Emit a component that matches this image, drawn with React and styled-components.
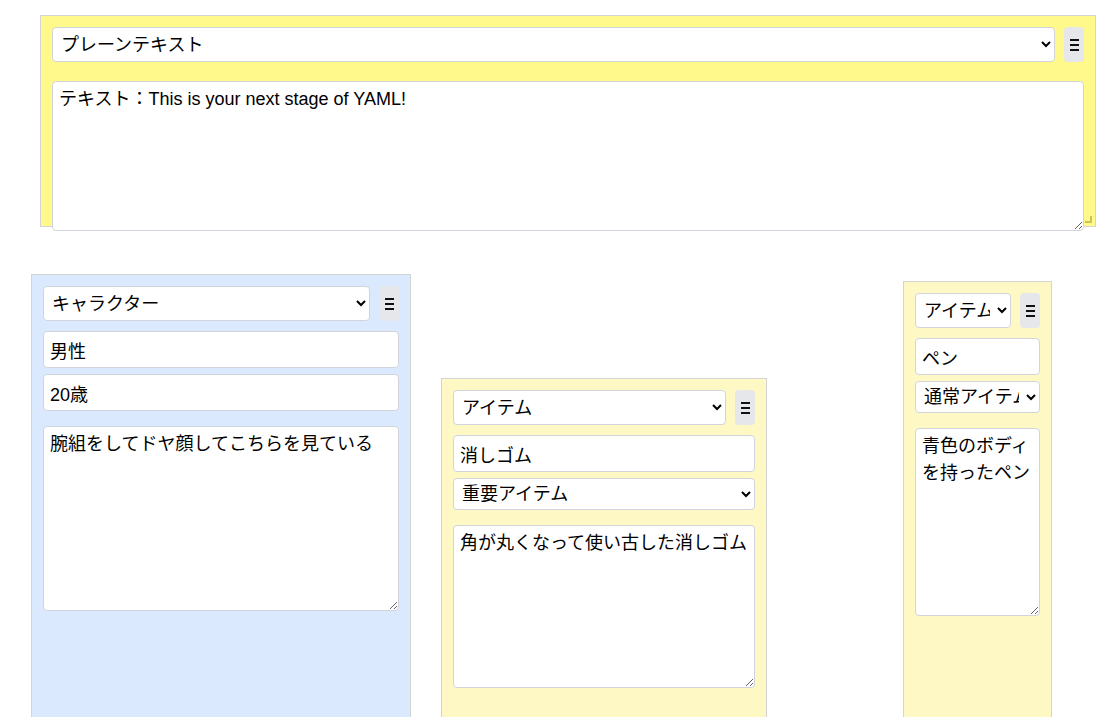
import styled, { createGlobalStyle } from "styled-components";

const GlobalStyle = createGlobalStyle`
    html, body {
        margin: 0;
        padding: 0;
        background: #fff;
        overflow: hidden;
    }
    body {
        font-family: "Liberation Sans", "Noto Sans CJK JP", sans-serif;
        color: #000;
    }
`;

const Board = styled.div`
    position: relative;
    width: 100%;
    height: 100vh;
    overflow: hidden;
`;

const colors = {
    plain: "#fff98b",
    character: "#dbe9fe",
    item: "#fef8c5",
};

const Card = styled.div`
    position: absolute;
    display: flex;
    flex-direction: column;
    align-items: stretch;
    box-sizing: border-box;
    padding: 11px;
    border: 1px solid #d4d4d4;
    background: ${({ $kind }) => colors[$kind]};
`;

const ResizeMark = styled.span`
    position: absolute;
    right: 3px;
    bottom: 3px;
    width: 5px;
    height: 5px;
    border-right: 2px solid #cfc25a;
    border-bottom: 2px solid #cfc25a;
`;

const Header = styled.div`
    display: flex;
    align-items: stretch;
    gap: 9px;
    margin-bottom: 10px;
`;

const fieldBase = `
    box-sizing: border-box;
    margin: 0;
    border: 1px solid #d1d5db;
    border-radius: 4px;
    background: #fff;
    color: #000;
    font-family: "Liberation Sans", "Noto Sans CJK JP", sans-serif;
    font-size: 18px;
    outline: none;
`;

const TypeSelect = styled.select`
    ${fieldBase}
    flex: 1;
    min-width: 0;
    height: 35px;
    padding: 0 4px;
`;

const MenuButton = styled.button`
    flex: none;
    display: flex;
    align-items: center;
    justify-content: center;
    width: 20px;
    height: 35px;
    padding: 0;
    border: none;
    border-radius: 4px;
    background: #e5e7eb;
    color: #111;
    cursor: pointer;
`;

const Fields = styled.div`
    display: flex;
    flex-direction: column;
    gap: 6px;
    margin-bottom: 6px;
`;

const TextInput = styled.input`
    ${fieldBase}
    width: 100%;
    height: 37px;
    padding: 0 6px;
`;

const FieldSelect = styled.select`
    ${fieldBase}
    width: 100%;
    height: 32px;
    padding: 0 4px;
`;

const Note = styled.textarea`
    ${fieldBase}
    flex: none;
    display: block;
    width: 100%;
    margin-top: 9px;
    padding: 4px 6px 6px;
    line-height: 27px;
    resize: vertical;
`;

const MenuIcon = () => (
    <svg width="9" height="12" viewBox="0 0 9 12" aria-hidden="true">
        <path d="M0 1h9M0 6h9M0 11h9" stroke="currentColor" strokeWidth="2" />
    </svg>
);

const typeOptions = ["プレーンテキスト", "キャラクター", "アイテム"];
const rankOptions = ["通常アイテム", "重要アイテム"];

const cards = [
    {
        id: 1,
        kind: "plain",
        type: "プレーンテキスト",
        box: { left: 40, top: 15, width: 1056, height: 212 },
        fields: [],
        note: "テキスト：This is your next stage of YAML!",
        noteHeight: 150,
    },
    {
        id: 2,
        kind: "character",
        type: "キャラクター",
        box: { left: 31, top: 274, width: 380, height: 560 },
        fields: [
            { input: "男性" },
            { input: "20歳" },
        ],
        note: "腕組をしてドヤ顔してこちらを見ている",
        noteHeight: 185,
    },
    {
        id: 3,
        kind: "item",
        type: "アイテム",
        box: { left: 441, top: 378, width: 326, height: 460 },
        fields: [
            { input: "消しゴム" },
            { select: "重要アイテム" },
        ],
        note: "角が丸くなって使い古した消しゴム",
        noteHeight: 163,
    },
    {
        id: 4,
        kind: "item",
        type: "アイテム",
        box: { left: 903, top: 281, width: 149, height: 560 },
        fields: [
            { input: "ペン" },
            { select: "通常アイテム" },
        ],
        note: "青色のボディを持ったペン",
        noteHeight: 188,
    },
];

const CardView = ({ card }) => (
    <Card $kind={card.kind} style={card.box}>
        <Header>
            <TypeSelect defaultValue={card.type}>
                {typeOptions.map(o => <option key={o}>{o}</option>)}
            </TypeSelect>
            <MenuButton title="≡"><MenuIcon /></MenuButton>
        </Header>
        {card.fields.length > 0 && (
            <Fields>
                {card.fields.map((f, i) => f.input !== undefined
                    ? <TextInput key={i} defaultValue={f.input} />
                    : (
                        <FieldSelect key={i} defaultValue={f.select}>
                            {rankOptions.map(o => <option key={o}>{o}</option>)}
                        </FieldSelect>
                    ))}
            </Fields>
        )}
        <Note defaultValue={card.note} style={{ height: card.noteHeight }} />
        <ResizeMark />
    </Card>
);

export default function App() {
    return (
        <>
            <GlobalStyle />
            <Board>
                {cards.map(c => <CardView key={c.id} card={c} />)}
            </Board>
        </>
    );
}
